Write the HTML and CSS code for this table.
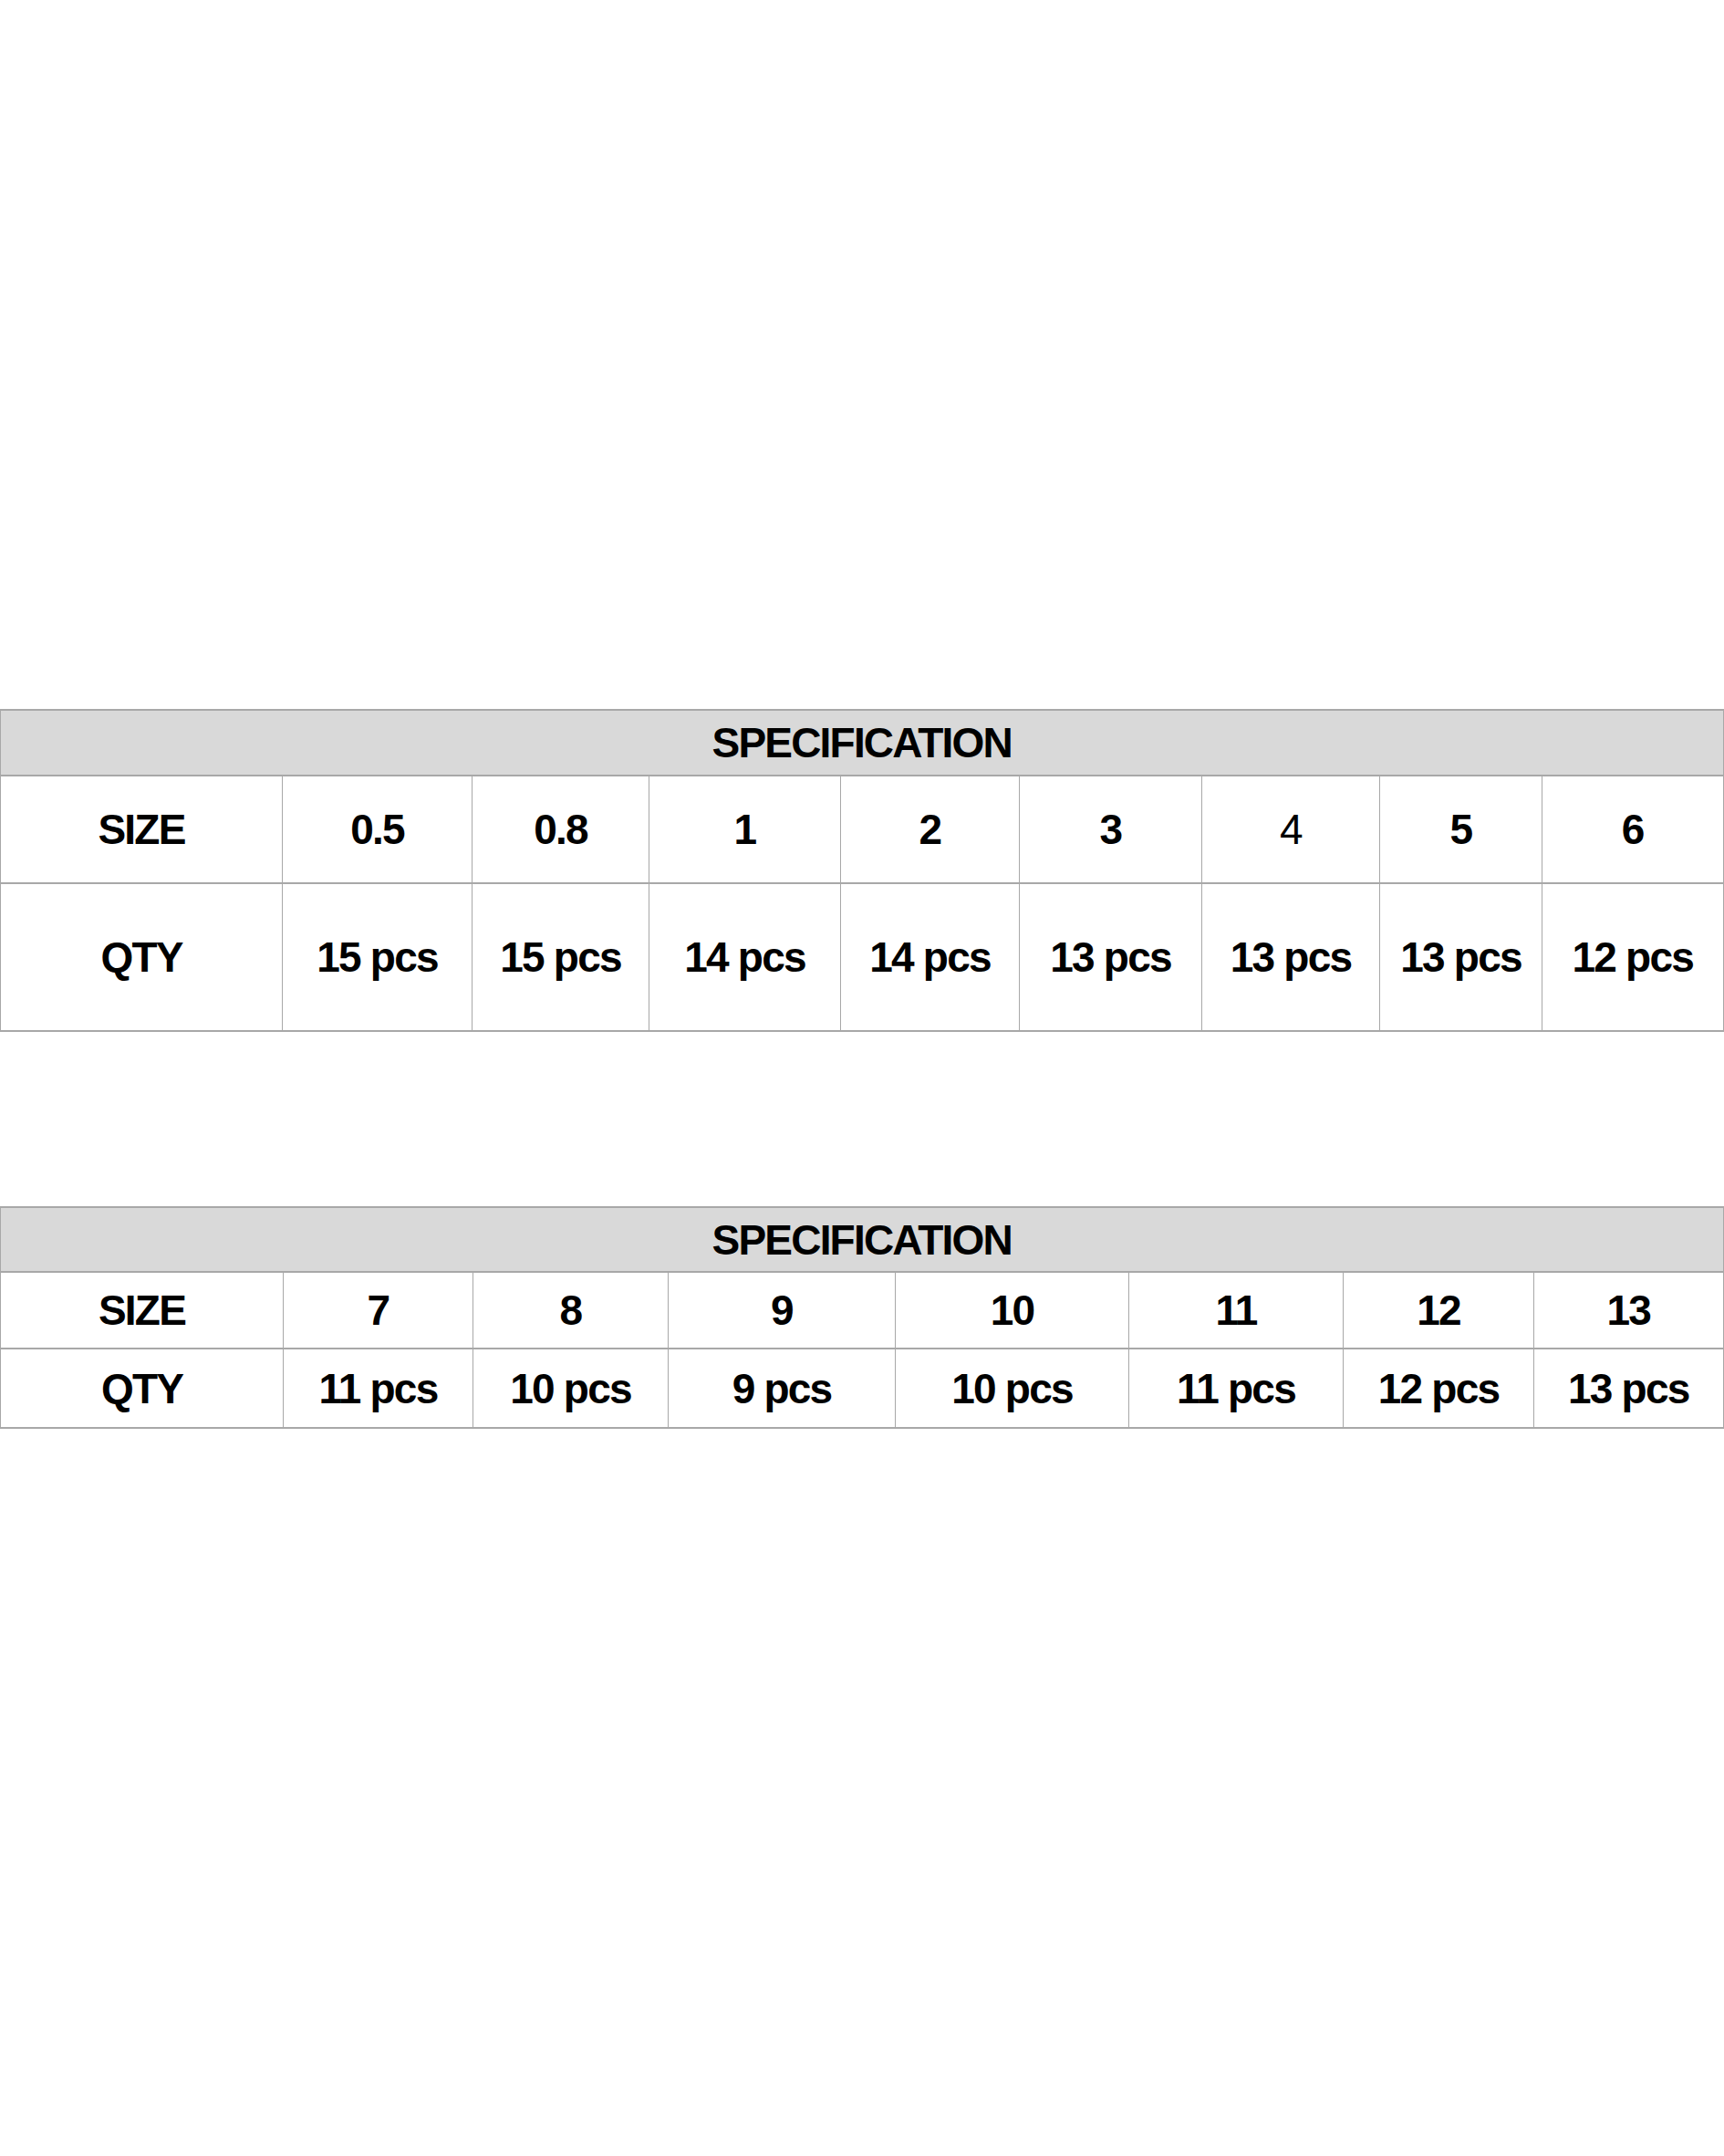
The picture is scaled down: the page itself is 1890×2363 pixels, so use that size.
FILE: index.html
```html
<!DOCTYPE html>
<html>
<head>
<meta charset="utf-8">
<link rel="stylesheet" href="styles.css">
</head>
<body>
<main class="page">
  <table class="spec spec-a">
    <colgroup>
      <col class="c1"><col class="c2"><col class="c3"><col class="c4"><col class="c5"><col class="c6"><col class="c7"><col class="c8"><col class="c9">
    </colgroup>
    <tr class="head"><th colspan="9">SPECIFICATION</th></tr>
    <tr class="size"><td>SIZE</td><td>0.5</td><td>0.8</td><td>1</td><td>2</td><td>3</td><td class="light">4</td><td>5</td><td>6</td></tr>
    <tr class="qty"><td>QTY</td><td>15 pcs</td><td>15 pcs</td><td>14 pcs</td><td>14 pcs</td><td>13 pcs</td><td>13 pcs</td><td>13 pcs</td><td>12 pcs</td></tr>
  </table>

  <table class="spec spec-b">
    <colgroup>
      <col class="c1"><col class="c2"><col class="c3"><col class="c4"><col class="c5"><col class="c6"><col class="c7"><col class="c8">
    </colgroup>
    <tr class="head"><th colspan="8">SPECIFICATION</th></tr>
    <tr class="size"><td>SIZE</td><td>7</td><td>8</td><td>9</td><td>10</td><td>11</td><td>12</td><td>13</td></tr>
    <tr class="qty"><td>QTY</td><td>11 pcs</td><td>10 pcs</td><td>9 pcs</td><td>10 pcs</td><td>11 pcs</td><td>12 pcs</td><td>13 pcs</td></tr>
  </table>
</main>
</body>
</html>
```

FILE: styles.css
```css
html, body {
  margin: 0;
  padding: 0;
  background: #ffffff;
}

.page {
  width: 1890px;
  padding-top: 777px;
}

.spec {
  width: 1889px;
  border-collapse: collapse;
  table-layout: fixed;
  font-family: "Liberation Sans", Arial, sans-serif;
  font-weight: bold;
  font-size: 46px;
  letter-spacing: -1.8px;
  color: #000000;
}

.spec th,
.spec td {
  border-top: 2px solid #a8a8a8;
  border-bottom: 2px solid #a8a8a8;
  border-left: 1px solid #a8a8a8;
  border-right: 1px solid #a8a8a8;
  text-align: center;
  vertical-align: middle;
  padding: 0;
}

.spec td:last-child,
.spec th:last-child {
  border-right-width: 2px;
}

.spec th {
  background: #d9d9d9;
  font-weight: bold;
}

.spec .light {
  font-weight: normal;
}

.spec-b {
  margin-top: 191px;
}

/* first table columns */
.spec-a .c1 { width: 309px; }
.spec-a .c2 { width: 208px; }
.spec-a .c3 { width: 194px; }
.spec-a .c4 { width: 210px; }
.spec-a .c5 { width: 196px; }
.spec-a .c6 { width: 200px; }
.spec-a .c7 { width: 195px; }
.spec-a .c8 { width: 178px; }
.spec-a .c9 { width: 199px; }

.spec-a .head { height: 72px; }
.spec-a .size { height: 118px; }
.spec-a .qty { height: 162px; }

/* second table columns */
.spec-b .c1 { width: 310px; }
.spec-b .c2 { width: 208px; }
.spec-b .c3 { width: 214px; }
.spec-b .c4 { width: 249px; }
.spec-b .c5 { width: 256px; }
.spec-b .c6 { width: 235px; }
.spec-b .c7 { width: 209px; }
.spec-b .c8 { width: 208px; }

.spec-b .head { height: 71px; }
.spec-b .size { height: 84px; }
.spec-b .qty { height: 87px; }
```
